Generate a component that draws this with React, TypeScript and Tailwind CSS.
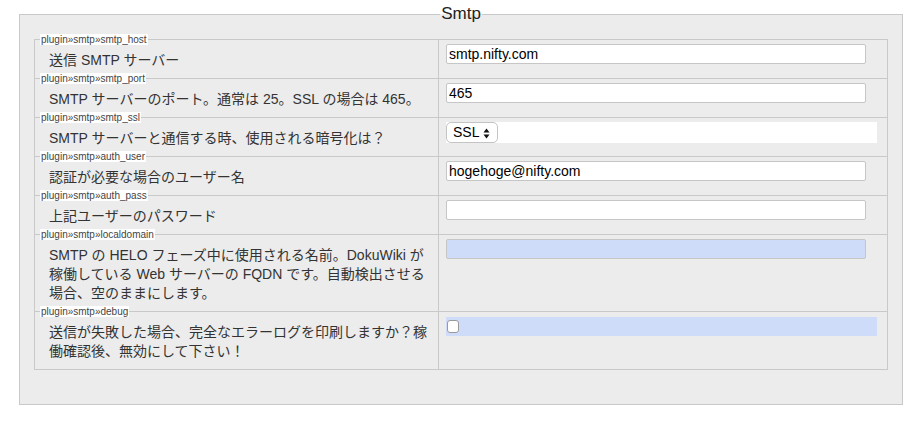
import type { ReactNode } from 'react';

const font = { fontFamily: '"Liberation Sans", Arial, "Noto Sans CJK JP", sans-serif' };

interface SettingRowProps {
  tag: string;
  label: ReactNode;
  first?: boolean;
  children: ReactNode;
}

function SettingRow({ tag, label, first, children }: SettingRowProps) {
  return (
    <div className={`grid grid-cols-[404px_1fr] ${first ? '' : 'border-t border-[#c9c9c9]'}`}>
      <div className="relative border-r border-[#c9c9c9] pl-[14px] pr-[8px] pt-[11px] pb-[8px]">
        <span className="absolute left-[5px] top-[-6px] bg-white px-px text-[10px] leading-[11px] text-[#444]">
          {tag}
        </span>
        <span className="block text-[14px] leading-[19px] text-[#333]">{label}</span>
      </div>
      <div className="pl-[7px] pr-[10px] pt-[4px]">{children}</div>
    </div>
  );
}

function TextInput({ value, blue }: { value?: string; blue?: boolean }) {
  return (
    <div
      className={`flex h-[20px] w-[420px] items-center rounded-[2px] border border-[#c6c6c6] px-[2px] text-[14px] text-black ${
        blue ? 'bg-[#cedcfa]' : 'bg-white'
      }`}
    >
      {value}
    </div>
  );
}

export default function App() {
  return (
    <div className="min-h-[422px] bg-white pl-[19px] pr-[15px] pt-[4px]" style={font}>
      <fieldset className="border border-[#c9c9c9] bg-[#ececec] px-[14px] pt-[15px] pb-[34px]">
        <legend className="mx-auto px-px text-[17px] leading-[20px] text-[#222]">Smtp</legend>
        <div className="border border-[#c9c9c9]">
          <SettingRow first tag="plugin»smtp»smtp_host" label="送信 SMTP サーバー">
            <TextInput value="smtp.nifty.com" />
          </SettingRow>
          <SettingRow tag="plugin»smtp»smtp_port" label="SMTP サーバーのポート。通常は 25。SSL の場合は 465。">
            <TextInput value="465" />
          </SettingRow>
          <SettingRow tag="plugin»smtp»smtp_ssl" label="SMTP サーバーと通信する時、使用される暗号化は？">
            <div className="flex h-[21px] items-center bg-white">
              <span className="flex h-[21px] w-[52px] items-center gap-[4px] rounded-[5px] border border-[#c4c4c4] bg-white pl-[6px] text-[14px] text-black">
                SSL
                <svg width="7" height="11" viewBox="0 0 7 11" className="mt-px">
                  <path d="M3.5 0.5 L6.5 4.5 L0.5 4.5 Z" fill="#111" />
                  <path d="M3.5 10.5 L6.5 6.5 L0.5 6.5 Z" fill="#111" />
                </svg>
              </span>
            </div>
          </SettingRow>
          <SettingRow tag="plugin»smtp»auth_user" label="認証が必要な場合のユーザー名">
            <TextInput value="hogehoge@nifty.com" />
          </SettingRow>
          <SettingRow tag="plugin»smtp»auth_pass" label="上記ユーザーのパスワード">
            <TextInput />
          </SettingRow>
          <SettingRow
            tag="plugin»smtp»localdomain"
            label="SMTP の HELO フェーズ中に使用される名前。DokuWiki が稼働している Web サーバーの FQDN です。自動検出させる場合、空のままにします。"
          >
            <TextInput blue />
          </SettingRow>
          <SettingRow
            tag="plugin»smtp»debug"
            label="送信が失敗した場合、完全なエラーログを印刷しますか？稼働確認後、無効にして下さい！"
          >
            <div className="mt-px flex h-[19px] items-center bg-[#cedcfa]">
              <span className="ml-px h-[13px] w-[12px] rounded-[3px] border border-[#9a9a9a] bg-white" />
            </div>
          </SettingRow>
        </div>
      </fieldset>
    </div>
  );
}
